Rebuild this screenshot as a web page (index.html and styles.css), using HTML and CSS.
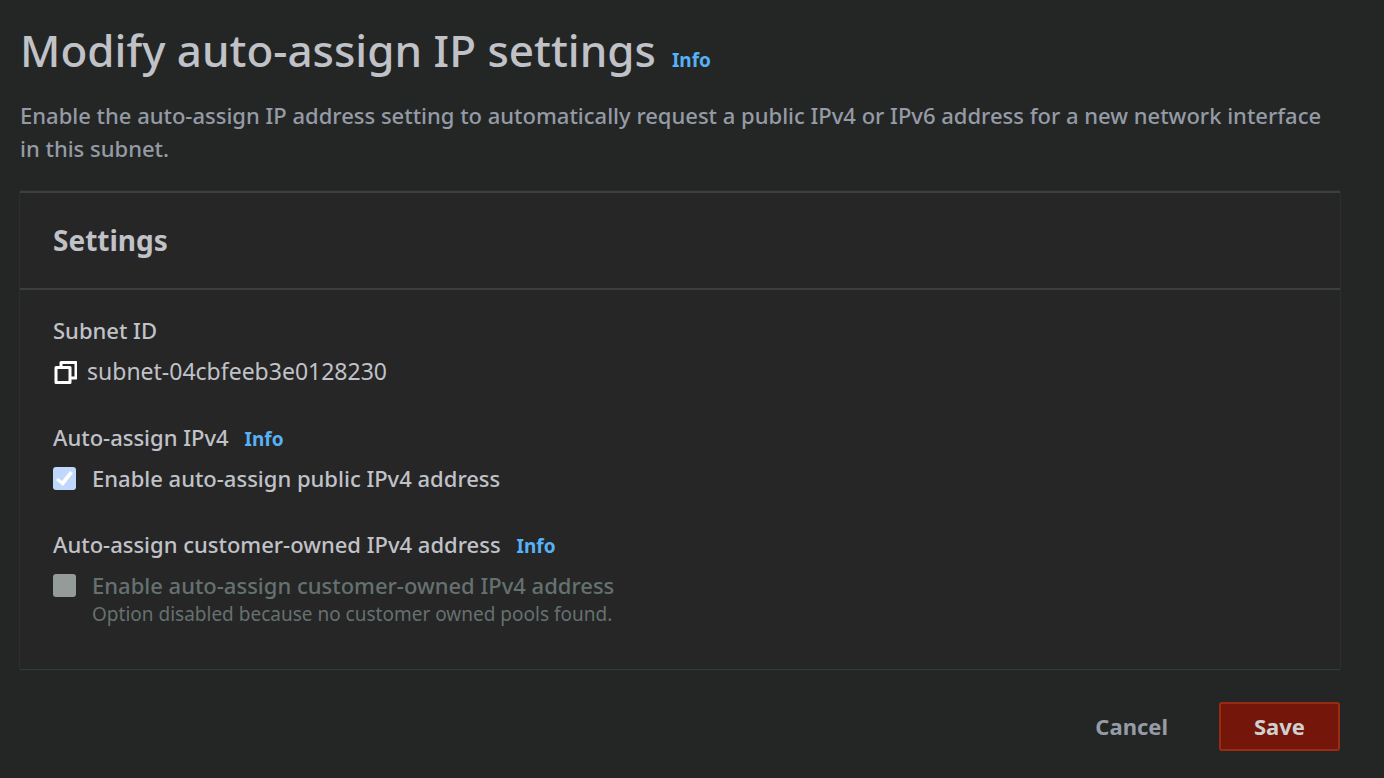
FILE: index.html
```html
<!DOCTYPE html>
<html lang="en">
<head>
<meta charset="utf-8">
<title>Modify auto-assign IP settings</title>
<link rel="stylesheet" href="styles.css">
</head>
<body>
<main class="page">
  <header class="page-header">
    <div class="title-row">
      <h1 class="title">Modify auto-assign IP settings</h1>
      <a class="info" href="#">Info</a>
    </div>
    <p class="description">Enable the auto-assign IP address setting to automatically request a public IPv4 or IPv6 address for a new network interface in this subnet.</p>
  </header>
  <form class="form">
    <section class="card">
      <h2 class="card-title">Settings</h2>
      <div class="card-body">
        <div class="field">
          <div class="field-label">Subnet ID</div>
          <div class="subnet">
            <button class="copy" type="button" aria-label="Copy subnet ID">
              <svg width="24" height="24" viewBox="0 0 24 24" fill="none" stroke="#fff" stroke-width="3" stroke-linejoin="round"><path d="M3 7.500H17V22.500H3ZM8 7.500V2.500H23V18H17"/></svg>
            </button>
            <span>subnet-04cbfeeb3e0128230</span>
          </div>
        </div>
        <div class="field">
          <div class="field-label">Auto-assign IPv4 <a class="info" href="#">Info</a></div>
          <div class="option">
            <input class="check" type="checkbox" id="public" checked>
            <label for="public">Enable auto-assign public IPv4 address</label>
          </div>
        </div>
        <div class="field">
          <div class="field-label">Auto-assign customer-owned IPv4 address <a class="info" href="#">Info</a></div>
          <div class="option option-disabled">
            <input class="check" type="checkbox" id="owned" aria-describedby="owned-note" disabled>
            <label for="owned">Enable auto-assign customer-owned IPv4 address</label>
            <p class="note" id="owned-note">Option disabled because no customer owned pools found.</p>
          </div>
        </div>
      </div>
    </section>
    <div class="actions">
      <button class="button" type="button">Cancel</button>
      <button class="button button-primary" type="submit">Save</button>
    </div>
  </form>
</main>
</body>
</html>
```
FILE: styles.css
```css
* { box-sizing: border-box; }
body { margin: 0; background: #242625; color: #c0c2c8; font: 500 22px/33px "Noto Sans", sans-serif; }
h1, h2, p { margin: 0; }
.page { padding: 22px 44px 24px 20px; }
.title-row { display: flex; align-items: baseline; gap: 16px; }
.title { font-size: 44px; line-height: 56px; font-weight: 500; }
.info { color: #57b1f5; font-size: 19px; line-height: 24px; font-weight: 700; text-decoration: none; }
.description { margin-top: 21px; color: #959ba5; }
.card { margin-top: 26px; background: #262626; border-top: 2px solid #3b3f3e; box-shadow: 0 1px 1px 0 #2f3c3f, 0 0 1px 1px #282c2d; }
.card-title { padding: 30px 33px; border-bottom: 2px solid #3b3f3e; font-size: 28px; line-height: 35px; font-weight: 700; }
.card-body { display: grid; gap: 33px; padding: 24px 33px 43px; }
.field { display: grid; gap: 8px; }
.field-label { display: flex; align-items: baseline; gap: 16px; }
.subnet { display: flex; align-items: center; gap: 10px; font-size: 23px; font-weight: 400; }
.copy { display: flex; padding: 0; border: 0; background: none; }
.option { display: grid; grid-template-columns: 23px 1fr; column-gap: 16px; align-items: center; }
.check { appearance: none; width: 23px; height: 23px; margin: 0; border-radius: 3px; background: #c0d8fd; }
.check:checked::before { content: ""; display: block; height: 23px; background: #fff; clip-path: polygon(3px 13px, 5px 11px, 9px 14px, 17px 4px, 20px 6px, 10px 19px); }
.check:disabled { background: #939c99; }
.option-disabled { color: #657170; }
.note { grid-column: 2; font-size: 19px; line-height: 24px; font-weight: 400; }
.actions { display: flex; justify-content: flex-end; gap: 16px; margin-top: 33px; }
.button { padding: 6px 33px; border: 2px solid transparent; border-radius: 3px; background: none; color: #969ca6; font: 700 22px/33px "Noto Sans", sans-serif; }
.button-primary { border-color: #972c13; background: #74160a; color: #d0d0d0; }
```
